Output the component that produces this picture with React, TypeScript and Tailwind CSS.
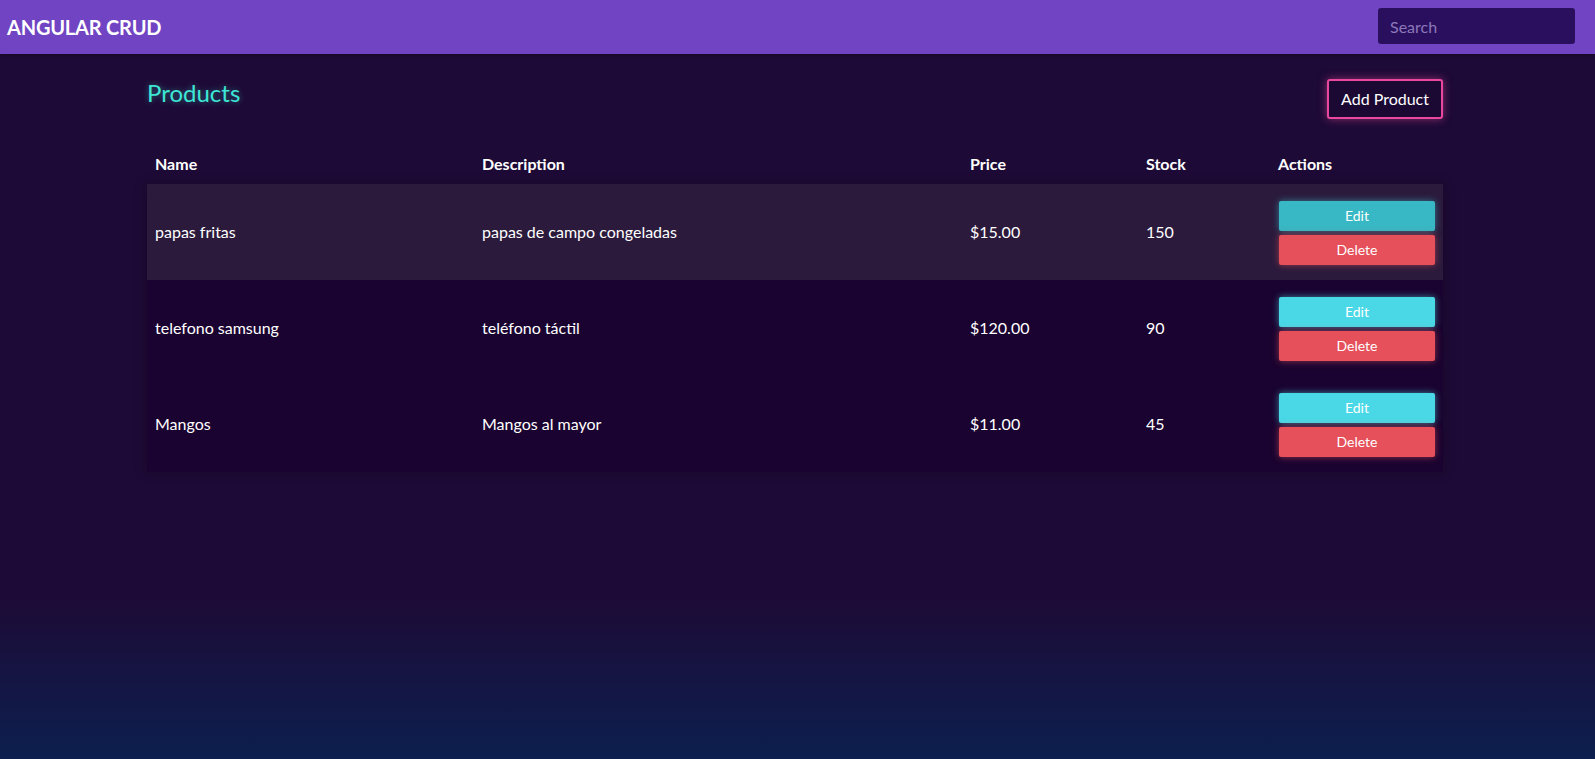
import React from "react";

type Product = {
  id: number;
  name: string;
  description: string;
  price: number;
  stock: number;
};

const products: Product[] = [
  { id: 1, name: "papas fritas", description: "papas de campo congeladas", price: 15, stock: 150 },
  { id: 2, name: "telefono samsung", description: "teléfono táctil", price: 120, stock: 90 },
  { id: 3, name: "Mangos", description: "Mangos al mayor", price: 11, stock: 45 },
];

const cols = "grid grid-cols-[327px_488px_176px_132px_173px]";

const App = () => {
  return (
    <div className="min-h-screen w-full bg-[linear-gradient(180deg,#1e0a36_0%,#1e0a36_78%,#0c1f4e_100%)] font-['Lato','Open_Sans',sans-serif] text-white">
      {/* navbar */}
      <nav className="flex h-[54px] items-center justify-between bg-[#7044c2] pl-[7px] pr-[20px] shadow-[0_1px_3px_rgba(0,0,0,0.35)]">
        <span className="text-[20px] font-bold tracking-[-0.2px]">ANGULAR CRUD</span>
        <input
          type="text"
          placeholder="Search"
          className="-mt-[2px] h-[36px] w-[197px] rounded-[3px] bg-[#2b0f5f] px-3 text-[16px] text-white outline-none placeholder:text-[#8c78b8]"
        />
      </nav>

      <div className="ml-[147px] w-[1296px] pt-[25px]">
        <div className="flex items-start justify-between">
          <h3 className="text-[24px] leading-[1.2] text-[#3ee6d6] [text-shadow:0_0_6px_rgba(62,230,214,0.45)]">
            Products
          </h3>
          <button className="h-[40px] rounded-[3px] border-2 border-[#e8489e] bg-[#1b0833] px-[12px] text-[16px] text-white shadow-[0_0_8px_rgba(232,72,158,0.55)]">
            Add Product
          </button>
        </div>

        <div className="mt-[25px]">
          <div className={`${cols} h-[40px] items-center text-[16px] font-bold`}>
            <div className="px-2">Name</div>
            <div className="px-2">Description</div>
            <div className="px-2">Price</div>
            <div className="px-2">Stock</div>
            <div className="px-2">Actions</div>
          </div>

          <div className="shadow-[0_0_12px_rgba(0,0,0,0.25)]">
            {products.map((product, i) => (
              <div
                key={product.id}
                className={`${cols} h-[96px] items-center text-[16px] ${
                  i === 0 ? "bg-[#2b1a3c]" : "bg-[#1a0330]"
                }`}
              >
                <div className="px-2">{product.name}</div>
                <div className="px-2">{product.description}</div>
                <div className="px-2">${product.price.toFixed(2)}</div>
                <div className="px-2">{product.stock}</div>
                <div className="flex flex-col gap-1 pl-[9px] pr-2 pt-[1px]">
                  <button
                    className={`h-[30px] w-full rounded-[2px] text-[14px] text-white ${
                      i === 0
                        ? "bg-[#38b8c4] shadow-[0_0_7px_rgba(56,184,196,0.6)]"
                        : "bg-[#4ad8e6] shadow-[0_0_7px_rgba(74,216,230,0.6)]"
                    }`}
                  >
                    Edit
                  </button>
                  <button className="h-[30px] w-full rounded-[2px] bg-[#e5505a] text-[14px] text-white shadow-[0_0_7px_rgba(229,80,90,0.6)]">
                    Delete
                  </button>
                </div>
              </div>
            ))}
          </div>
        </div>
      </div>
    </div>
  );
};

export default App;
